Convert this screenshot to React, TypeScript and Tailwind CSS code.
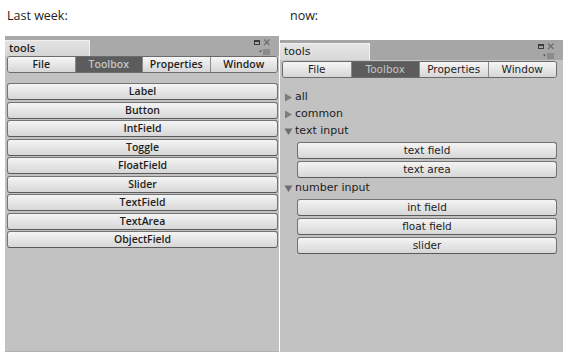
const leftItems = ["Label", "Button", "IntField", "Toggle", "FloatField", "Slider", "TextField", "TextArea", "ObjectField"];
const tabs = ["File", "Toolbox", "Properties", "Window"];

const tree = [
  { label: "all", open: false, items: [] as string[] },
  { label: "common", open: false, items: [] as string[] },
  { label: "text input", open: true, items: ["text field", "text area"] },
  { label: "number input", open: true, items: ["int field", "float field", "slider"] },
];

function WindowIcons() {
  return (
    <svg width="22" height="20" viewBox="0 0 22 20" className="absolute right-[5px] top-[2px]">
      {/* maximize box */}
      <rect x="2.5" y="2.5" width="5" height="4" fill="none" stroke="#3c3c3c" strokeWidth="1" />
      <rect x="2.5" y="2.5" width="5" height="1.5" fill="#3c3c3c" />
      {/* close */}
      <path d="M12 1.5 L17.5 7 M17.5 1.5 L12 7" stroke="#6a6a6a" strokeWidth="1.1" />
      {/* menu */}
      <path d="M7 12.5 L10 12.5 L8.5 14.5 Z" fill="#555" />
      <rect x="11" y="11.5" width="7" height="1" fill="#707070" />
      <rect x="11" y="13.5" width="7" height="1" fill="#707070" />
      <rect x="11" y="15.5" width="7" height="1" fill="#707070" />
    </svg>
  );
}

function Toolbar({ font }: { font: string }) {
  return (
    <div className="flex h-[17px] rounded-[3px] border border-[#6b6b6b] overflow-hidden">
      {tabs.map((t, i) => {
        const active = t === "Toolbox";
        return (
          <div
            key={t}
            className={
              "flex-1 flex items-center justify-center text-[10.5px] leading-none " +
              (i > 0 ? "border-l border-[#8a8a8a] " : "") +
              (active
                ? "bg-[#5c5c5c] text-[#c4c4c4]"
                : "bg-gradient-to-b from-[#f6f6f6] to-[#d6d6d6] text-[#1e1e1e]")
            }
            style={{ fontFamily: font }}
          >
            {t}
          </div>
        );
      })}
    </div>
  );
}

function Btn({ label, font }: { label: string; font: string }) {
  return (
    <div
      className="h-[17px] flex items-center justify-center rounded-[3px] border border-[#737373] border-b-[#5a5a5a] bg-gradient-to-b from-[#f4f4f4] to-[#d7d7d7] text-[10.5px] leading-none text-[#1e1e1e]"
      style={{ fontFamily: font }}
    >
      {label}
    </div>
  );
}

function Triangle({ open }: { open: boolean }) {
  return open ? (
    <svg width="9" height="9" viewBox="0 0 9 9">
      <path d="M0.5 1.5 L8.5 1.5 L4.5 8 Z" fill="#6e6e6e" />
    </svg>
  ) : (
    <svg width="9" height="9" viewBox="0 0 9 9">
      <path d="M1 0.5 L8 4.5 L1 8.5 Z" fill="#7c7c7c" />
    </svg>
  );
}

export default function App() {
  const leftFont = '"Open Sans", "DejaVu Sans", sans-serif';
  const rightFont = '"DejaVu Sans", "Liberation Sans", sans-serif';

  return (
    <div className="w-[566px] h-[362px] bg-white flex overflow-hidden">
      {/* Last week */}
      <div className="w-[279px] pl-[5px] flex flex-col">
        <div
          className="h-[36px] pl-[2px] pt-[7px] text-[12.5px] text-[#222]"
          style={{ fontFamily: '"Open Sans", sans-serif' }}
        >
          Last week:
        </div>
        <div className="h-[316px] bg-[#c2c2c2] flex flex-col border-b border-[#b0b0b0]">
          <div className="relative h-[20px] bg-[#a9a9a9] flex items-end">
            <div
              className="w-[85px] h-[16px] bg-gradient-to-b from-[#e4e4e4] to-[#d4d4d4] border-t border-r border-[#f0f0f0] pl-[4px] flex items-center text-[11px] text-[#1c1c1c] font-semibold"
              style={{ fontFamily: leftFont }}
            >
              tools
            </div>
            <WindowIcons />
          </div>
          <div className="pl-[2px] pr-[1px] font-semibold">
            <Toolbar font={leftFont} />
          </div>
          <div className="mt-[10px] pl-[2px] pr-[1px] flex flex-col gap-[1.5px] font-semibold">
            {leftItems.map((l) => (
              <Btn key={l} label={l} font={leftFont} />
            ))}
          </div>
        </div>
      </div>

      {/* now */}
      <div className="w-[283px] ml-[1px] flex flex-col">
        <div
          className="h-[40px] pl-[10px] pt-[7px] text-[12.5px] text-[#222]"
          style={{ fontFamily: '"Open Sans", sans-serif' }}
        >
          now:
        </div>
        <div className="h-[312px] bg-[#c2c2c2] flex flex-col">
          <div className="relative h-[20px] bg-[#a6a6a6] flex items-end">
            <div
              className="w-[90px] h-[17px] bg-gradient-to-b from-[#e6e6e6] to-[#d8d8d8] border-t border-r border-[#f2f2f2] pl-[4px] flex items-center text-[11px] text-[#1c1c1c]"
              style={{ fontFamily: rightFont }}
            >
              tools
            </div>
            <WindowIcons />
          </div>
          <div className="mt-[1px] pl-[2px] pr-[6px]">
            <Toolbar font={rightFont} />
          </div>
          <div className="mt-[11px] pl-[4px] pr-[6px] flex flex-col" style={{ fontFamily: rightFont }}>
            {tree.map((g) => (
              <div key={g.label} className="flex flex-col">
                <div className="h-[17px] flex items-center gap-[2px] text-[11px] text-[#1c1c1c]">
                  <Triangle open={g.open} />
                  <span>{g.label}</span>
                </div>
                {g.items.length > 0 && (
                  <div className="pl-[13px] flex flex-col gap-[2px] py-[2px]">
                    {g.items.map((it) => (
                      <Btn key={it} label={it} font={rightFont} />
                    ))}
                  </div>
                )}
              </div>
            ))}
          </div>
        </div>
      </div>
    </div>
  );
}
